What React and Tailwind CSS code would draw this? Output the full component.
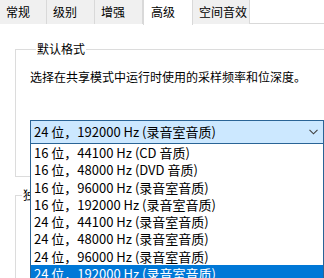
import React from 'react';

const tabs = [
  { label: '常规', w: 'w-[47px]' },
  { label: '级别', w: 'w-[48px]' },
  { label: '增强', w: 'w-[48px]' },
  { label: '高级', w: 'w-[50px]', active: true },
  { label: '空间音效', w: 'w-[57px]' },
];

const options = [
  '16 位，44100 Hz (CD 音质)',
  '16 位，48000 Hz (DVD 音质)',
  '16 位，96000 Hz (录音室音质)',
  '16 位，192000 Hz (录音室音质)',
  '24 位，44100 Hz (录音室音质)',
  '24 位，48000 Hz (录音室音质)',
  '24 位，96000 Hz (录音室音质)',
  '24 位，192000 Hz (录音室音质)',
];

const Chevron = () => (
  <svg width="9" height="6" viewBox="0 0 9 6" className="mr-[5px]">
    <path d="M0.5 0.8 L4.5 4.8 L8.5 0.8" fill="none" stroke="#404040" strokeWidth="1.1" />
  </svg>
);

export default function App() {
  return (
    <div className="relative w-[324px] h-[278px] overflow-hidden bg-white text-black font-['Noto_Sans_CJK_SC',sans-serif]">
      {/* tabs */}
      <div className="flex h-[24px] border-b border-[#d9d9d9]">
        {tabs.map((t) => (
          <div
            key={t.label}
            className={
              t.active
                ? `${t.w} h-[25px] pl-[7px] bg-white border-x border-[#d9d9d9] text-[12px] leading-[23px] relative z-10`
                : `${t.w} h-[24px] pl-[6px] bg-[#f0f0f0] border-r border-[#d9d9d9] text-[12px] leading-[23px]`
            }
          >
            {t.label}
          </div>
        ))}
      </div>

      {/* 默认格式 */}
      <fieldset className="mt-[17px] ml-[15px] w-[330px] h-[136px] border-t border-l border-b border-[#dcdcdc] pl-[14px]">
        <legend className="ml-[6px] px-[1px] text-[12px] leading-[16px]">默认格式</legend>
        <p className="mt-[12px] text-[12px] leading-[16px]">选择在共享模式中运行时使用的采样频率和位深度。</p>
        <div className="mt-[35px] w-[294px] h-[24px] flex items-center justify-between border border-[#2a6496] bg-[#cce8ff] pl-[3px] text-[13px]">
          <span>24 位，192000 Hz (录音室音质)</span>
          <Chevron />
        </div>
      </fieldset>

      {/* 独占模式 */}
      <fieldset className="mt-[10px] ml-[15px] w-[330px] h-[120px] border-t border-l border-[#dcdcdc]">
        <legend className="ml-[6px] px-[1px] text-[12px] leading-[16px]">独占模式</legend>
      </fieldset>

      {/* open dropdown list */}
      <div className="absolute left-[30px] top-[144px] w-[294px] bg-white border-x border-b border-[#2a6496] z-20">
        {options.map((o, i) => (
          <div
            key={o}
            className={`h-[17.3px] pl-[3px] text-[13px] leading-[17px] whitespace-nowrap ${
              i === options.length - 1 ? 'bg-[#0078d7] text-white' : ''
            }`}
          >
            {o}
          </div>
        ))}
      </div>
    </div>
  );
}
